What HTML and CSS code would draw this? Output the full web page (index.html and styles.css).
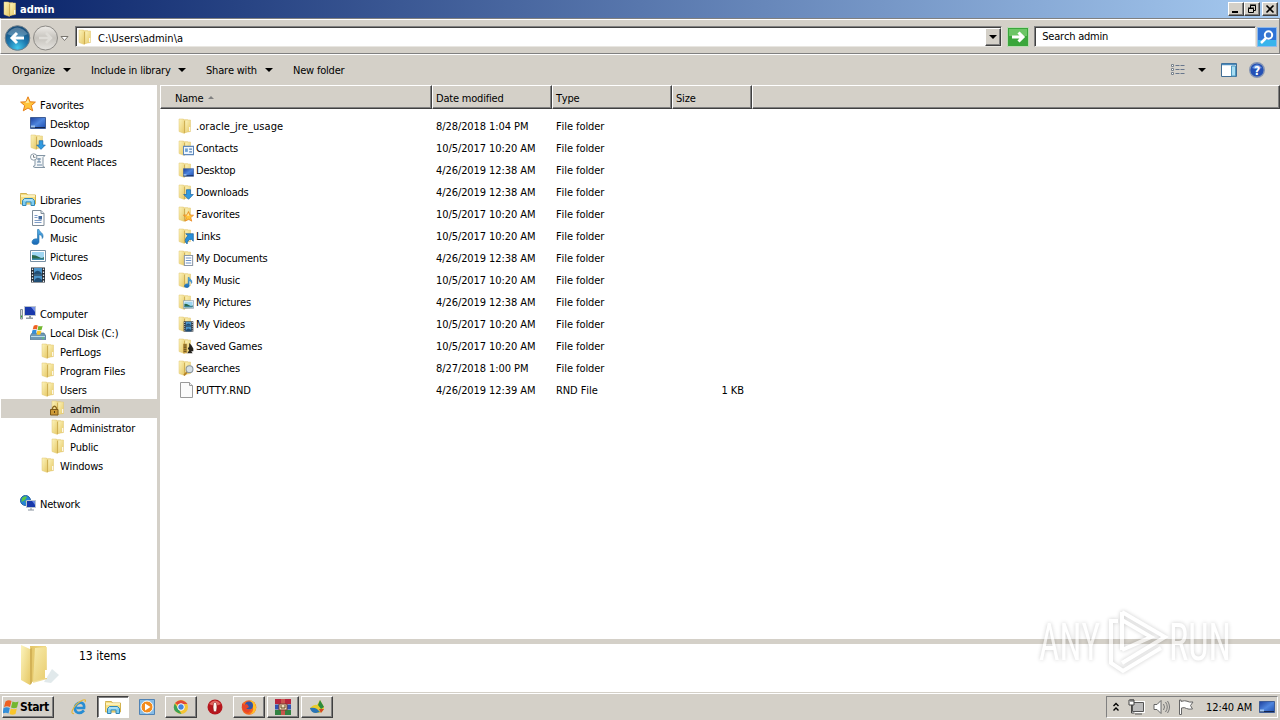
FILE: index.html
```html
<!DOCTYPE html>
<html lang="en"><head>
<meta charset="UTF-8">
<title>admin</title>
<link rel="stylesheet" href="styles.css">
</head>
<body>
  <svg class="defs" width="0" height="0">
    <defs>
      <linearGradient id="gold" x1="0" y1="0" x2="1" y2="1"><stop offset="0" stop-color="#fcf4bd"/><stop offset="1" stop-color="#e6c865"/></linearGradient>
      <linearGradient id="goldDark" x1="0" x2="1"><stop offset="0" stop-color="#e3c566"/><stop offset="1" stop-color="#f0da88"/></linearGradient>
      <linearGradient id="screen" x1="0" y1="0" x2="1" y2="1"><stop offset="0" stop-color="#1c3f9c"/><stop offset=".5" stop-color="#4f86de"/><stop offset="1" stop-color="#1d4cae"/></linearGradient>
      <radialGradient id="backBlue" cx=".5" cy=".9" r=".8"><stop offset="0" stop-color="#43c8ec"/><stop offset=".5" stop-color="#1d78ae"/><stop offset="1" stop-color="#174f7c"/></radialGradient>
      <linearGradient id="fwdGray" x1="0" y1="0" x2="0" y2="1"><stop offset="0" stop-color="#eeece8"/><stop offset=".5" stop-color="#c6c3bd"/><stop offset="1" stop-color="#e6e4e0"/></linearGradient>
      <linearGradient id="blue" x1="0" y1="0" x2="0" y2="1"><stop offset="0" stop-color="#58b4ec"/><stop offset="1" stop-color="#1766b4"/></linearGradient>
    </defs>
    <symbol id="folder" viewBox="0 0 16 16"><path d="M6 1.500h5v10l1 2-5 1.500z" fill="url(#goldDark)"/><path d="M8 2h5.500v11.500l-5.500 1z" fill="url(#gold)" stroke="#e0c671" stroke-width=".5"/><path d="M2 1h4.500l1 1.500v13l-5.500-2z" fill="url(#gold)" stroke="#e0c671" stroke-width=".5"/><path d="M7.500 3v12" stroke="#c9a84c" stroke-width=".8"/><path d="M12.700 9v4" stroke="#fff"/></symbol>
    <symbol id="star" viewBox="0 0 16 16"><path d="M8 .8l2.100 5 5.300.3-4.100 3.500 1.400 5.200L8 12l-4.700 2.800 1.400-5.200L.6 6.100l5.300-.3z" fill="#ffc43b" stroke="#e67e19"/><path d="M8 3l1.300 3.800-4 .2" fill="#ffeaa0"/></symbol>
    <symbol id="desktop" viewBox="0 0 16 16"><path d="M.5 2.500h15v11H.5z" fill="url(#screen)" stroke="#3f5d96"/><path d="M1 12.500h14" stroke="#16264d"/><path d="M1 10.500h4v2H1z" fill="#9fc4ef"/></symbol>
    <symbol id="arrowdown" viewBox="0 0 16 16"><path d="M5 1h6v7h4l-7 7-7-7h4z" fill="#319ae0" stroke="#1763a8"/></symbol>
    <symbol id="downloads" viewBox="0 0 16 16"><use href="#folder" x="-1"/><use href="#arrowdown" x="6" y="6" width="10" height="10"/></symbol>
    <symbol id="recent" viewBox="0 0 16 16"><path d="M5 2.500h10l-2 2v9l2 1H5l-2-1 2-1z" fill="#f3f6f8" stroke="#8395a4"/><path d="M7 6h4M7 9h4M7 12h5" stroke="#6b87a3"/><path d="M9 5v4" stroke="#6b87a3"/><circle cx="3.700" cy="4" r="3.200" fill="#fff" stroke="#8d9ba6"/><path d="M3.500 2v2.300h2" fill="none" stroke="#59646d" stroke-width=".8"/></symbol>
    <symbol id="libraries" viewBox="0 0 16 16"><path d="M.5 3.500V2.500h6l1 1.500h8V13H.5z" fill="#f7df83" stroke="#d2b250"/><path d="M1 5h14" stroke="#fff8ce" stroke-width="1.500"/><path d="M2.500 14.500V9.500l2-2h8l2 2v5h-3.500v-3.500h-5v3.500z" fill="#80cdf0" stroke="#3287b5"/><path d="M4 9h8.500" stroke="#d5f2ff"/></symbol>
    <symbol id="document" viewBox="0 0 16 16"><path d="M2.500.5H11l3 3v12H2.500z" fill="#fdfdfd" stroke="#7f8c98"/><path d="M11 .5v3h3" fill="#dfe5ea" stroke="#7f8c98"/><path d="M4.500 5.500h3M4.500 7.500h3M4.500 12.500h7M4.500 10.500h7" stroke="#7e9cc6"/><path d="M8.500 6h3.500v3.500H8.500z" fill="#41699d"/></symbol>
    <symbol id="lines" viewBox="0 0 16 16"><path d="M2 .8h12v14.400H2z" fill="#fff" stroke="#8c98a6" stroke-width="1.500"/><path d="M4 4.500h8M4 8h8M4 11.500h8" stroke="#6f94c8" stroke-width="1.500"/></symbol>
    <symbol id="music" viewBox="0 0 16 16"><path d="M7.500.5h1.500c.5 3 4.500 3 4 7.500-.5 1.500-.8 1.500-.8 1.500.3-2.500-1.200-3.500-3.200-4v7.500c0 3-6.500 3.700-7 .5C1.800 10.500 5 9.300 7.500 10z" fill="url(#blue)" stroke="#206ea8" stroke-width=".6"/></symbol>
    <symbol id="pictures" viewBox="0 0 16 16"><path d="M.5 2.500h15v11H.5z" fill="#fff" stroke="#7890a4"/><path d="M2 4h12v8H2z" fill="#9fd6f2"/><path d="M2 7q4 0 7 2t5 0v3H2z" fill="#2b6a4c"/><path d="M2 10.500h12V12H2z" fill="#3d8cae"/></symbol>
    <symbol id="videos" viewBox="0 0 16 16"><path d="M1 .5h14v15H1z" fill="#252c35"/><path d="M4 1h8v6.500H4zM4 8.500h8V15H4z" fill="#4b94ca"/><path d="M4 6q4-5 8 1H4zM4 14q3-6 8-1v2H4z" fill="#214e75"/><path d="M2.500 1.500v14M13.500 1.500v14" stroke="#e7edf2" stroke-dasharray="1.500 1.500" stroke-width="1.300"/></symbol>
    <symbol id="computer" viewBox="0 0 16 16"><path d="M.5 4.500h2V14h-2z" fill="#d9dee0" stroke="#87929a"/><path d="M1 11.500h1" stroke="#31a031" stroke-width="2"/><path d="M4.500 1.500h11v9h-11z" fill="#1939ac" stroke="#bac3cc"/><path d="M11 2h4v5z" fill="#7590e9"/><path d="M9 11h2v1.500h2V14H6v-1.500h3z" fill="#919ba4"/></symbol>
    <symbol id="winlogo" viewBox="0 0 16 16"><path d="M2.500 2.500q3-2 6-.5L7 8Q4 6.500 1 8z" fill="#ef6122"/><path d="M9.500 2.500q3 1.500 6 0L14 8.500Q11 10 8 8.500z" fill="#73b72f"/><path d="M.6 9q3-1.500 6.200 0L5.500 14.500Q3 13-.500 14.500z" fill="#348ed8"/><path d="M7.800 9.500q3 1.500 6 0l-1.300 5.500q-3 1.500-6 0z" fill="#f9c52a"/></symbol>
    <symbol id="disk" viewBox="0 0 16 16"><path d="M2 9h12l2 3v3.500H0V12z" fill="#6e97b3" stroke="#416987" stroke-width=".6"/><path d="M1 12.500h14" stroke="#b9dceb"/><path d="M12 14h2" stroke="#59d35c"/><use href="#winlogo" x="2" y="0" width="11" height="11"/></symbol>
    <symbol id="locked" viewBox="0 0 16 16"><use href="#folder"/><path d="M2.500 10V8q2-3.500 4 0v2" fill="none" stroke="#8c6921" stroke-width="1.400"/><path d="M.5 9.500h7.500V15H.5z" fill="#cd9936" stroke="#7d591a"/><path d="M4.500 11v2" stroke="#5b3f0e"/></symbol>
    <symbol id="network" viewBox="0 0 16 16"><circle cx="5.500" cy="5.500" r="5" fill="#2584d6" stroke="#2261a2"/><path d="M2 3q3-3 5-1L5 5 1.500 7zM5 6h4l-2 4z" fill="#5cc645"/><path d="M6.500 5.500h9v7h-9z" fill="#1738aa" stroke="#bbc5ce"/><path d="M12 6h3v4z" fill="#6788e4"/><path d="M11 13v2M8 15h6" stroke="#87929d"/></symbol>
    <symbol id="contact" viewBox="0 0 16 16"><path d="M.7 2h14.600v12H.7z" fill="#eef6fe" stroke="#5f88bb" stroke-width="1.500"/><path d="M3 5h4v5H3z" fill="#6b9fd4"/><path d="M9 6h4M9 10h4" stroke="#5680b4" stroke-width="1.500"/></symbol>
    <symbol id="link" viewBox="0 0 16 16"><path d="M4 1h11v11l-3-3q-6 1-6 7-6-5 1-12z" fill="#278fd9" stroke="#17629f"/></symbol>
    <symbol id="games" viewBox="0 0 16 16"><path d="M9 0l3 3 3 5v4h-3l2 3H6l3-4-2-3 2-3z" fill="#27241f"/><path d="M0 1h6v14H0z" fill="#c59d45"/><path d="M1 3h4M1 6h4M1 9h4M1 12h4" stroke="#5e4818" stroke-width="1.500"/></symbol>
    <symbol id="magnify" viewBox="0 0 16 16"><path d="M6 10l-4.500 5" stroke="#b58227" stroke-width="2.500"/><circle cx="9.500" cy="6" r="5" fill="#d5dfe5" stroke="#8b959d" stroke-width="1.500"/></symbol>
    <symbol id="blank" viewBox="0 0 16 16"><path d="M2.500.5h9l3 3v12h-12z" fill="#fbfbfb" stroke="#9a9a9a"/><path d="M11.500.5v3h3" fill="#eee" stroke="#9a9a9a"/></symbol>
  </svg>

  <header class="titlebar">
    <svg class="icon"><use href="#folder"/></svg>
    <span>admin</span>
    <div class="controls">
      <button><svg viewBox="0 0 14 12"><path d="M3 9h6" stroke="#000" stroke-width="2"/></svg></button>
      <button><svg viewBox="0 0 14 12"><path d="M5.500 5V2.500h5v5H9M5 2h6" fill="none" stroke="#000"/><path d="M3.500 5.500h5v4h-5zM3 5h6" fill="none" stroke="#000"/></svg></button>
      <button class="close"><svg viewBox="0 0 14 12"><path d="M3.500 2.500l7 7M10.500 2.500l-7 7" stroke="#000" stroke-width="1.600"/></svg></button>
    </div>
  </header>

  <div class="navbar">
    <svg class="arrows" viewBox="0 0 70 30">
      <circle cx="13.500" cy="16" r="12.300" fill="url(#backBlue)" stroke="#6f7f8b"/>
      <path d="M3 12q10-13 21 0-10 5-21 0z" fill="#fff" opacity=".25"/>
      <path d="M8 16h12M13 11l-5 5 5 5" fill="none" stroke="#fff" stroke-width="3"/>
      <circle cx="41.500" cy="16" r="12" fill="url(#fwdGray)" stroke="#8c8a86"/>
      <path d="M35 16h12M42 11l5 5-5 5" fill="none" stroke="#dedcd7" stroke-width="2.500"/>
      <path d="M57 14.500h7l-3.500 4z" fill="#fff" stroke="#77746e"/>
    </svg>
    <div class="address">
      <svg class="icon"><use href="#folder"/></svg>
      <span>C:\Users\admin\a</span>
      <button class="drop"><i class="caret"></i></button>
    </div>
    <svg class="go" viewBox="0 0 22 20"><path d="M.5.5h21v19H.5z" fill="#3aa63b" stroke="#b8dcb2"/><path d="M2 2h18v7H2z" fill="#6cc566"/><path d="M5 10h11M11.500 5.500L16 10l-4.500 4.500" fill="none" stroke="#fff" stroke-width="3"/></svg>
    <div class="search">Search admin</div>
    <svg class="find" viewBox="0 0 20 20"><path d="M.5.5h19v19H.5z" fill="#2f73d6" stroke="#8fb9ea"/><path d="M1 13h18v6H1z" fill="#38b4ec"/><path d="M9 11l-5 5" stroke="#fff" stroke-width="2.500"/><circle cx="11.500" cy="8" r="3.700" fill="#3b76cf" stroke="#fff" stroke-width="2"/></svg>
  </div>

  <div class="toolbar">
    <span class="organize">Organize<i class="caret"></i></span>
    <span class="include">Include in library<i class="caret"></i></span>
    <span class="share">Share with<i class="caret"></i></span>
    <span class="newfolder">New folder</span>
    <div class="views">
      <svg width="16" height="14" viewBox="0 0 16 14"><path d="M1.500 1.500h2v2h-2zM1.500 5.500h2v2h-2zM1.500 9.500h2v2h-2z" fill="#fff" stroke="#77818b"/><path d="M5.500 2.500h10M5.500 6.500h10M5.500 10.500h10" stroke="#67768c" stroke-dasharray="4 1"/></svg>
      <i class="caret"></i>
      <svg width="16" height="14" viewBox="0 0 16 14"><path d="M.5.5h15v13H.5z" fill="#fff" stroke="#3f6c94"/><path d="M1 1.500h14" stroke="#4a8bbd" stroke-width="1.500"/><path d="M10.500 3h4v10h-4z" fill="#a8ddf3" stroke="#4d98c0"/></svg>
      <svg width="16" height="16" viewBox="0 0 16 16"><circle cx="8" cy="8" r="7.300" fill="#2450b5" stroke="#8696b4" stroke-width="1.400"/><path d="M3 6q5-7 10 0-5 2-10 0z" fill="#6c96e0"/><text x="8" y="12.500" class="help">?</text></svg>
    </div>
  </div>

  <main>
    <div class="sidebar" id="sidebar"></div>
    <div class="files">
      <div class="columns">
        <span>Name<i class="sort"></i></span><span>Date modified</span><span>Type</span><span>Size</span><span></span>
      </div>
      <div id="fileList"></div>
    </div>
  </main>

  <div class="details">
    <svg width="42" height="44" viewBox="0 0 42 44"><path d="M24 38l8-13 7 6-8 8z" fill="#9db5bd" opacity=".3"/><path d="M10 2h16v32l-14 4z" fill="url(#goldDark)"/><path d="M15 4l12-1v32l-14 4z" fill="url(#gold)" opacity=".8"/><path d="M1 1l9 4v36L1 36z" fill="url(#gold)"/><path d="M10 5v36l2-2V4z" fill="#d3b256"/><path d="M26 26v8" stroke="#fff" stroke-width="2"/></svg>
    <span>13 items</span>
  </div>

  <footer class="taskbar">
    <button class="start"><svg class="icon"><use href="#winlogo"/></svg>Start</button>
    <div class="task flat"><svg class="icon" viewBox="0 0 16 16"><path d="M13 11.500q-4 4-7.500 1.500-3-3-.5-7 3.500-4 7-1.500 1.500 1.500 1 4.500H5.500" fill="none" stroke="#278dd3" stroke-width="2.700"/><path d="M14 3q1.500-3-2-2Q5 4 1.500 11q-1.500 4 1.500 3.500" fill="none" stroke="#e4b63c" stroke-width="1.200"/></svg></div>
    <div class="task pressed"><svg class="icon"><use href="#libraries"/></svg></div>
    <div class="task flat"><svg class="icon" viewBox="0 0 16 16"><path d="M.5.5h15v15H.5z" fill="#86bce6" stroke="#5083b5"/><circle cx="8" cy="8" r="6" fill="#f38c1d" stroke="#fff"/><path d="M6 4.500l5.500 3.500L6 11.500z" fill="#fff"/></svg></div>
    <div class="task"><svg class="icon" viewBox="0 0 16 16"><circle cx="8" cy="8" r="7" fill="#f4c534"/><path d="M8 8L2 4Q8-2 14.500 5H8z" fill="#df4937"/><path d="M1.800 4.500L6 11l2.500 4Q-2 13 1.800 4.500z" fill="#39a255"/><circle cx="8" cy="8" r="3.300" fill="#4285dd" stroke="#fff"/></svg></div>
    <div class="task flat"><svg class="icon" viewBox="0 0 16 16"><circle cx="8" cy="8" r="7.500" fill="#b6161d"/><path d="M2 5q6-7 12 0-6 3-12 0z" fill="#e46561"/><ellipse cx="8" cy="8" rx="2" ry="5" fill="#fff3ef" stroke="#801016" stroke-width=".6"/></svg></div>
    <div class="task"><svg class="icon" viewBox="0 0 16 16"><circle cx="8" cy="8.500" r="7.300" fill="#f5661f"/><path d="M9 1q7 2 6 9-1 5-6 5 4-3 3-6z" fill="#ffbf2a"/><circle cx="8" cy="6.500" r="4" fill="#3155a7"/><path d="M1 4l2 2 3-1 2 3-3 2 5 1-3 3Q0 13 1 4z" fill="#e8452a"/></svg></div>
    <div class="task"><svg class="icon rar" viewBox="0 0 18 16"><path d="M1 0h16v5H1z" fill="#b8243c"/><path d="M1 5.500h16v5H1z" fill="#3352b2"/><path d="M1 11h16v5H1z" fill="#328241"/><path d="M7 0h4v16H7z" fill="#c9554d"/><path d="M5 5h8v6H5z" fill="#eee1c0" stroke="#7b3c31"/><path d="M7 6v3h4V6" fill="none" stroke="#654622"/></svg></div>
    <div class="task"><svg class="icon" viewBox="0 0 16 16"><path d="M1 9Q5 5 8 6l3-5 4 7q0 6-7 6-5 0-7-5z" fill="#e9cb2c"/><path d="M9 6l2-5 4 7-3 2z" fill="#2a8b3c"/><path d="M1 9q4-1 7 1l3 3-4 1q-5 0-6-5z" fill="#2874b7"/><path d="M10 10l5 0-3 4z" fill="#d44526"/></svg></div>
    <div class="tray">
      <svg width="8" height="10" viewBox="0 0 8 10"><path d="M1.500 4L4 1.500 6.500 4M1.500 8.500L4 6l2.500 2.500" fill="none" stroke="#000" stroke-width="1.400"/></svg>
      <svg width="17" height="16" viewBox="0 0 17 16"><path d="M4.500 3.500h11v9h-11z" fill="#aaa" stroke="#fff" stroke-width="3"/><path d="M4.500 3.500h11v9h-11zM7 15h7" fill="#bbb" stroke="#555"/><path d="M1 1h5v5H1z" fill="#fff" stroke="#444"/><path d="M3.500 6v8h3M3 0v3M5 0v3" fill="none" stroke="#444"/></svg>
      <svg width="17" height="16" viewBox="0 0 17 16"><path d="M1 5.500h3L8 1.500v13l-4-4H1z" fill="#fff" stroke="#666"/><path d="M10.500 5q2 3 0 6M12.500 3q3.500 5 0 10M14.500 2q4 6 0 12" fill="none" stroke="#777"/></svg>
      <svg width="16" height="16" viewBox="0 0 16 16"><path d="M1.500 1v14.500h2V9q3-1 5 .5 2 1 6 .5l-2-3.500 2.500-3.500q-4 .5-6-.8-2-1-6 .2V1z" fill="#fff" stroke="#666"/></svg>
      <span>12:40 AM</span>
      <svg class="icon"><use href="#desktop"/></svg>
    </div>
  </footer>

  <svg class="watermark" viewBox="0 0 230 80">
    <text x="7" y="56" textLength="61" lengthAdjust="spacingAndGlyphs">ANY</text>
    <text x="137" y="56" textLength="62" lengthAdjust="spacingAndGlyphs">RUN</text>
    <path d="M90 8v38M90 8l43 25-43 26M86 17h-7v42l12 8 38-23M90 46l29-13-29-17"/>
  </svg>

  <script>
    // Navigation pane: indent level, icon, label
    const tree = [
      [0, 'star', 'Favorites'], [1, 'desktop', 'Desktop'], [1, 'downloads', 'Downloads'], [1, 'recent', 'Recent Places'],
      null,
      [0, 'libraries', 'Libraries'], [1, 'document', 'Documents'], [1, 'music', 'Music'], [1, 'pictures', 'Pictures'], [1, 'videos', 'Videos'],
      null,
      [0, 'computer', 'Computer'], [1, 'disk', 'Local Disk (C:)'], [2, 'folder', 'PerfLogs'], [2, 'folder', 'Program Files'],
      [2, 'folder', 'Users'], [3, 'locked', 'admin'], [3, 'folder', 'Administrator'], [3, 'folder', 'Public'], [2, 'folder', 'Windows'],
      null,
      [0, 'network', 'Network']
    ];

    // Files: name, date, small icon drawn over the folder
    const files = [
      ['.oracle_jre_usage', '8/28/2018 1:04 PM', ''],
      ['Contacts', '10/5/2017 10:20 AM', 'contact'],
      ['Desktop', '4/26/2019 12:38 AM', 'desktop'],
      ['Downloads', '4/26/2019 12:38 AM', 'arrowdown'],
      ['Favorites', '10/5/2017 10:20 AM', 'star'],
      ['Links', '10/5/2017 10:20 AM', 'link'],
      ['My Documents', '4/26/2019 12:38 AM', 'lines'],
      ['My Music', '10/5/2017 10:20 AM', 'music'],
      ['My Pictures', '4/26/2019 12:38 AM', 'pictures'],
      ['My Videos', '10/5/2017 10:20 AM', 'videos'],
      ['Saved Games', '10/5/2017 10:20 AM', 'games'],
      ['Searches', '8/27/2018 1:00 PM', 'magnify'],
      ['PUTTY.RND', '4/26/2019 12:39 AM', 'blank', 'RND File', '1 KB']
    ];

    document.getElementById('sidebar').innerHTML = tree.map(item => item ? `
      <div class="node level${item[0]}${item[2] === 'admin' ? ' selected' : ''}">
        <svg class="icon"><use href="#${item[1]}"/></svg><span>${item[2]}</span>
      </div>` : '<div class="node"></div>').join('');

    document.getElementById('fileList').innerHTML = files.map(([name, date, icon, type, size]) => `
      <div class="row">
        <span class="name"><svg class="icon" viewBox="0 0 16 16">${icon === 'blank'
          ? '<use href="#blank"/>'
          : `<use href="#folder" x="-1"/>${icon ? `<use href="#${icon}" x="5" y="5" width="11" height="11"/>` : ''}`
        }</svg><b${icon ? '' : ' class="wide"'}>${name}</b></span>
        <span>${date}</span><span>${type || 'File folder'}</span><span class="size">${size || ''}</span>
      </div>`).join('');
  </script>
</body></html>
```
FILE: styles.css
```css
* {
  box-sizing: border-box;
}
body {
  margin: 0;
  width: 1280px;
  height: 720px;
  overflow: hidden;
  display: flex;
  flex-direction: column;
  background-color: #d4d0c8;
  color: #000;
  font-family: 'DejaVu Sans Condensed', 'DejaVu Sans', sans-serif;
  font-stretch: condensed;
  font-size: 11px;
  font-kerning: none;
  letter-spacing: -0.2px;
  white-space: nowrap;
}
button {
  font: inherit;
  letter-spacing: inherit;
  padding: 0;
  background-color: #d4d0c8;
  border: 1px solid;
  border-color: #fff #404040 #404040 #fff;
  box-shadow: inset -1px -1px #808080;
}
svg {
  display: block;
  flex: none;
}
.defs {
  position: absolute;
}
.icon {
  width: 16px;
  height: 16px;
}
.caret {
  width: 0;
  height: 0;
  border: 4px solid transparent;
  border-top-color: #000;
  border-bottom: 0;
}

/* title bar */
.titlebar {
  height: 18px;
  flex: none;
  display: flex;
  align-items: center;
  gap: 2px;
  padding: 0 2px;
  background: linear-gradient(to right, #0a246a, #a6caf0);
  color: #fff;
  font-weight: bold;
  letter-spacing: 0;
}
.controls {
  margin-left: auto;
  display: flex;
}
.controls button {
  width: 16px;
  height: 14px;
}
.controls .close {
  margin-left: 2px;
}
.controls svg {
  width: 14px;
  height: 12px;
}

/* address and search */
.navbar {
  height: 36px;
  flex: none;
  display: flex;
  align-items: center;
  padding: 2px 2px 1px 3px;
  border: 1px solid;
  border-color: #808080 #808080 #808080 #fff;
  box-shadow: inset 0 1px #fff;
}
.arrows {
  width: 70px;
  height: 30px;
  margin-right: 1px;
}
.address, .search {
  height: 21px;
  display: flex;
  align-items: center;
  background-color: #fff;
  border: 1px solid;
  border-color: #808080 #e8e6e1 #e8e6e1 #808080;
  box-shadow: inset 1px 1px #404040;
}
.address {
  width: 928px;
  padding-left: 1px;
}
.address span {
  margin: 3px 0 0 5px;
  letter-spacing: 0;
}
.drop {
  width: 16px;
  height: 18px;
  margin: 1px 0 0 auto;
  display: flex;
  align-items: center;
  justify-content: center;
}
.go {
  width: 22px;
  height: 20px;
  margin: 0 5px;
}
.search {
  width: 222px;
  padding-left: 7px;
}
.find {
  width: 20px;
  height: 20px;
  margin-left: 1px;
}

/* command bar */
.toolbar {
  height: 31px;
  flex: none;
  display: flex;
  align-items: center;
  padding-left: 12px;
  border-top: 1px solid #fff;
}
.toolbar span {
  display: flex;
  align-items: center;
  justify-content: space-between;
}
.organize {
  width: 59px;
  margin-right: 20px;
}
.include {
  width: 95px;
  margin-right: 20px;
}
.share {
  width: 67px;
  margin-right: 20px;
}
.views {
  margin: 0 15px 0 auto;
  display: flex;
  align-items: center;
}
.views .caret {
  margin: 0 15px 0 12px;
}
.views svg + svg {
  margin-left: 12px;
}
.help {
  fill: #fff;
  font-size: 12px;
  font-weight: bold;
  text-anchor: middle;
}

/* panes */
main {
  height: 554px;
  flex: none;
  display: flex;
}
.sidebar {
  width: 157px;
  padding-top: 10px;
  background-color: #fff;
}
.node {
  height: 19px;
  display: flex;
  align-items: center;
  gap: 4px;
  padding-left: 20px;
}
.node svg {
  margin-top: -2px;
}
.node span {
  margin-top: 2px;
}
.level1 {
  padding-left: 30px;
}
.level2 {
  padding-left: 40px;
}
.level3 {
  padding-left: 50px;
}
.selected {
  margin-left: 1px;
  padding-left: 49px;
  background-color: #d4d0c8;
}
.files {
  flex: 1;
  margin-left: 3px;
  background-color: #fff;
}
.columns, .row {
  display: grid;
  grid-template-columns: 272px 120px 120px 80px 1fr;
}
.columns {
  height: 24px;
  margin-bottom: 6px;
  background-color: #d4d0c8;
}
.columns span {
  display: flex;
  align-items: center;
  padding: 3px 0 0 3px;
  border: 1px solid;
  border-color: #fff #404040 #404040 #fff;
  box-shadow: inset -1px -1px #808080;
}
.columns span:first-child {
  padding-left: 14px;
}
.sort {
  margin: -3px 0 0 5px;
  border: 3px solid transparent;
  border-top: 0;
  border-bottom-color: #808080;
}
.row {
  height: 22px;
  align-items: center;
}
.row > span {
  padding-left: 4px;
  letter-spacing: -0.08px;
}
.row .name {
  display: flex;
  align-items: center;
  gap: 2px;
  padding-left: 18px;
  letter-spacing: -0.2px;
}
.name svg {
  margin-top: -1px;
}
.name b {
  font-weight: normal;
}
.name .wide {
  letter-spacing: 0.05px;
}
.row .size {
  padding-right: 8px;
  text-align: right;
}

/* details pane */
.details {
  height: 54px;
  flex: none;
  display: flex;
  background-color: #fff;
  border-top: 5px solid #d4d0c8;
  border-bottom: 1px solid #d4d0c8;
  padding-left: 20px;
  font-size: 12px;
  letter-spacing: 0;
}
.details span {
  margin: 5px 0 0 17px;
}

/* taskbar */
.taskbar {
  height: 27px;
  display: flex;
  align-items: center;
  padding: 0 2px;
  border-top: 1px solid #fff;
}
.start {
  width: 52px;
  height: 22px;
  margin-right: 9px;
  display: flex;
  align-items: center;
  gap: 1px;
  font-size: 12px;
  font-weight: bold;
  letter-spacing: -0.4px;
}
.task {
  width: 32px;
  height: 22px;
  margin-right: 2px;
  display: flex;
  align-items: center;
  justify-content: center;
  border: 1px solid;
  border-color: #fff #404040 #404040 #fff;
  box-shadow: inset -1px -1px #808080;
}
.flat {
  border-color: transparent;
  box-shadow: none;
}
.pressed {
  background-color: #fff;
  border-color: #404040 #fff #fff #404040;
  box-shadow: inset 1px 1px #808080;
}
.task .rar {
  width: 18px;
}
.tray {
  width: 172px;
  height: 22px;
  margin-left: auto;
  display: flex;
  align-items: center;
  padding: 0 0 0 5px;
  border: 1px solid;
  border-color: #808080 #fff #fff #808080;
}
.tray svg + svg {
  margin-left: 8px;
}
.tray span {
  margin: 0 7px 0 12px;
  letter-spacing: -0.1px;
}

/* lies over the lower right corner */
.watermark {
  position: absolute;
  left: 1032px;
  top: 604px;
  width: 230px;
  height: 80px;
  filter: drop-shadow(0 0 2px rgba(0, 0, 0, 0.3));
  opacity: 0.65;
}
.watermark text {
  fill: #fff;
  font-family: Roboto, sans-serif;
  font-size: 52px;
  letter-spacing: 0;
}
.watermark path {
  fill: none;
  stroke: #fff;
  stroke-width: 4;
}
```
